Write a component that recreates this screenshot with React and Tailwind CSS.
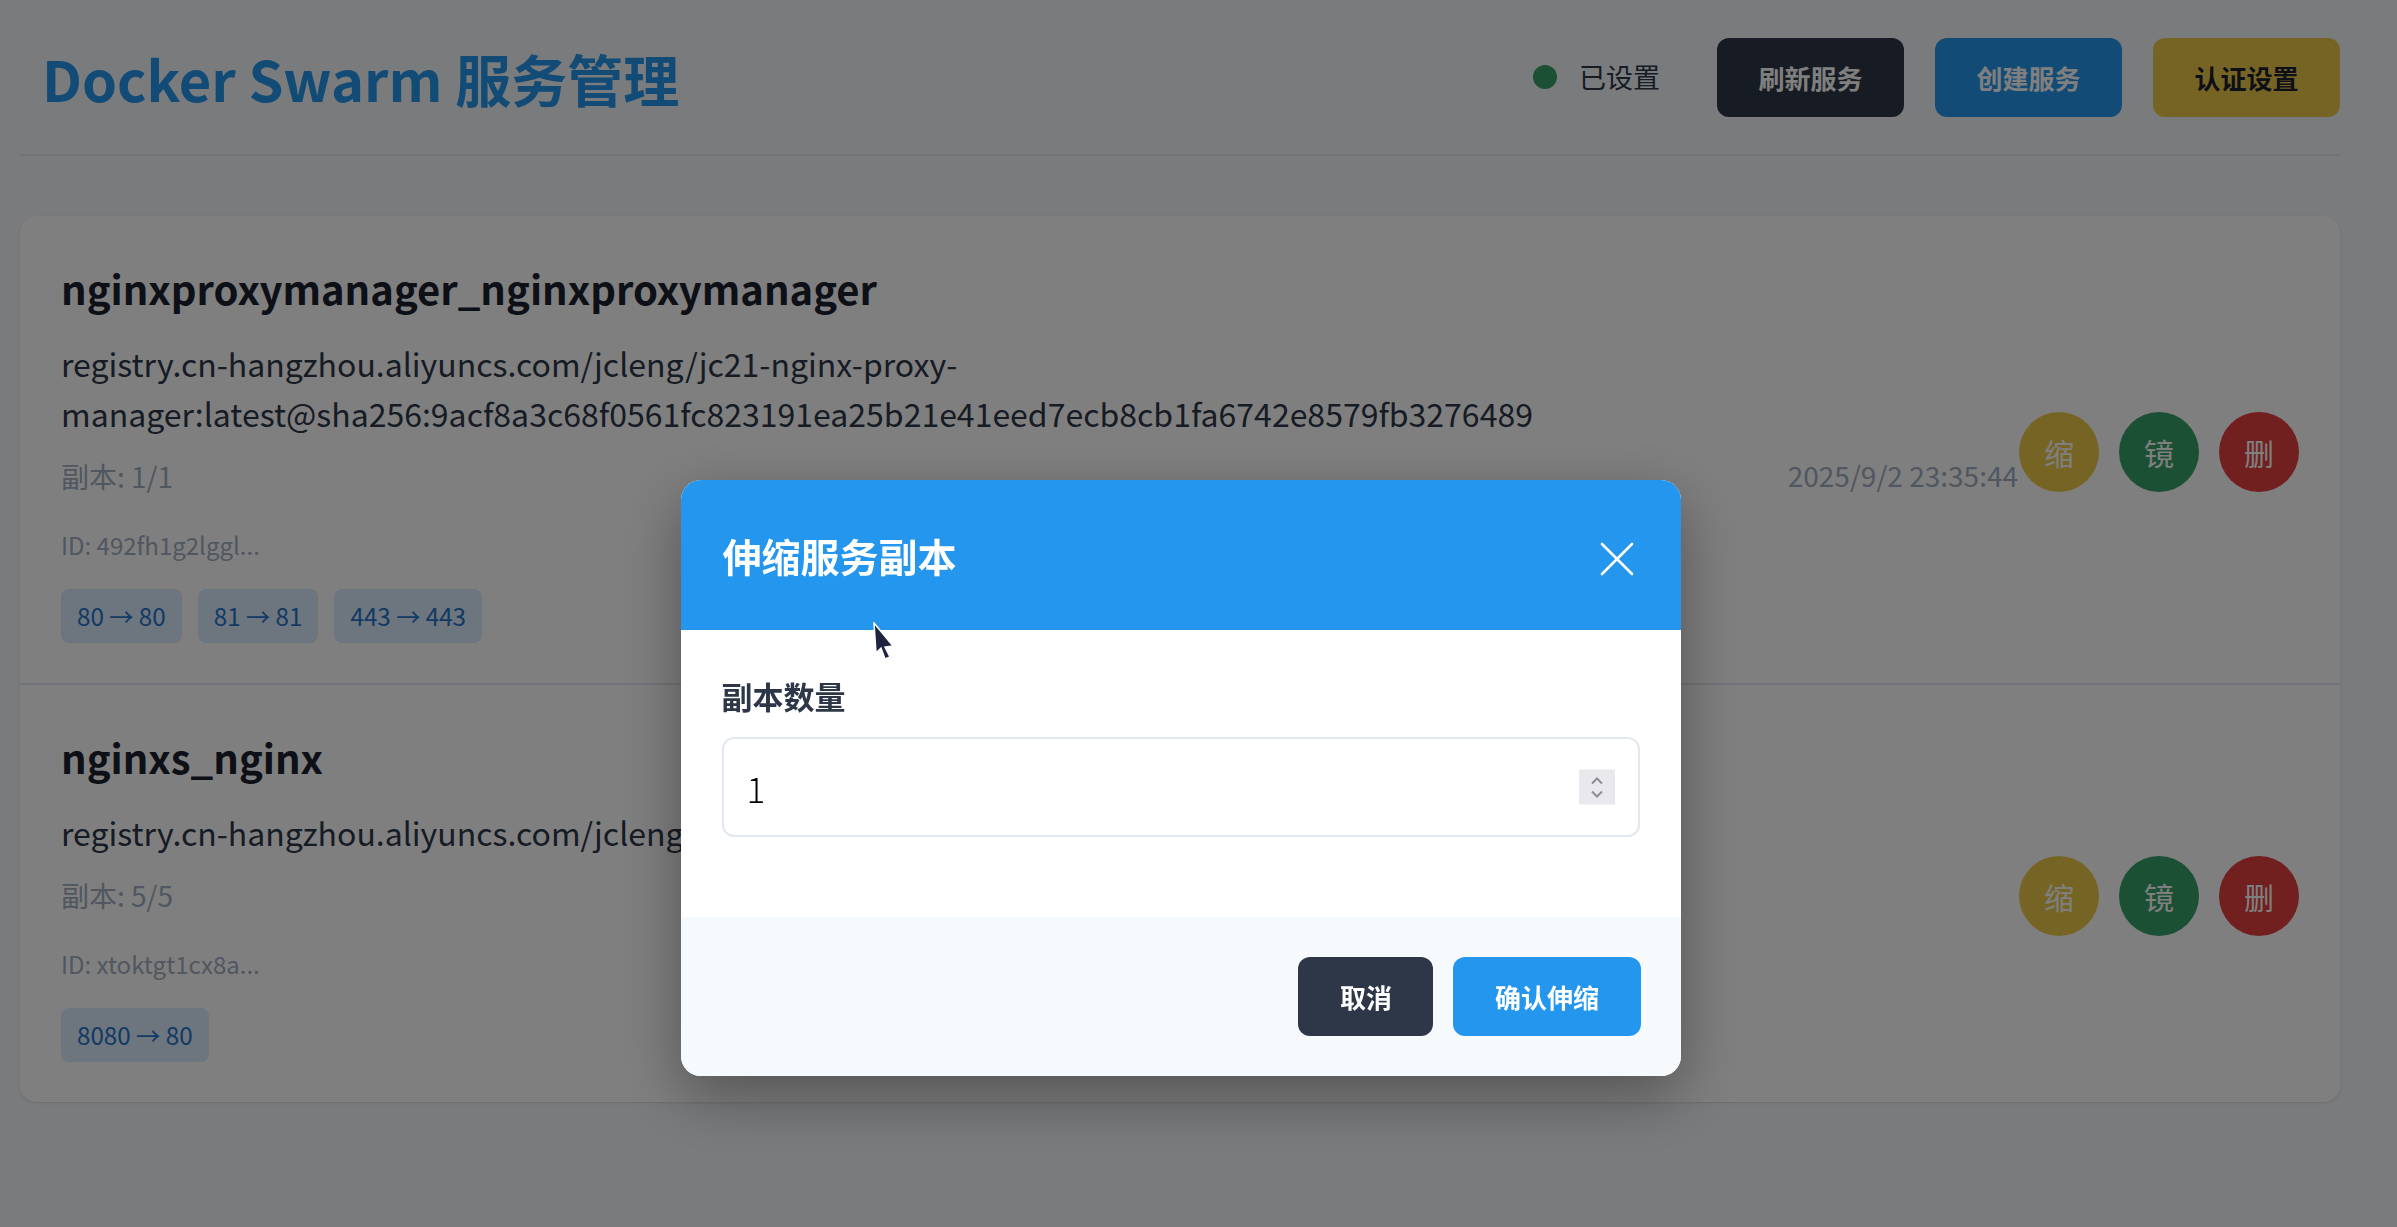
const services = [
  {
    name: "nginxproxymanager_nginxproxymanager",
    image:
      "registry.cn-hangzhou.aliyuncs.com/jcleng/jc21-nginx-proxy-manager:latest@sha256:9acf8a3c68f0561fc823191ea25b21e41eed7ecb8cb1fa6742e8579fb3276489",
    replicas: "1/1",
    id: "492fh1g2lggl...",
    ports: ["80 → 80", "81 → 81", "443 → 443"],
    created: "2025/9/2 23:35:44",
  },
  {
    name: "nginxs_nginx",
    image: "registry.cn-hangzhou.aliyuncs.com/jcleng/nginx:latest",
    replicas: "5/5",
    id: "xtoktgt1cx8a...",
    ports: ["8080 → 80"],
    created: "",
  },
];

function ServiceRow({ svc, last }) {
  return (
    <div
      className={
        "flex items-center px-[41px] pt-[45px] pb-[40px] " +
        (last ? "" : "border-b-2 border-[#e2e8f0]")
      }
    >
      <div className="flex-1 min-w-0">
        <h2 className="text-[40px] leading-[54px] font-bold text-[#1a202c] mb-[23px]">{svc.name}</h2>
        <p className="text-[32px] leading-[50px] text-[#2d3748] mb-[17px] pr-[40px]">{svc.image}</p>
        <p className="text-[28px] leading-[42px] text-[#a0aec0] mb-[31px]">副本: {svc.replicas}</p>
        <p className="text-[24px] leading-[33px] text-[#a0aec0] mb-[28px]">ID: {svc.id}</p>
        <div className="flex gap-[16px]">
          {svc.ports.map((p) => (
            <span
              key={p}
              className="h-[54px] px-[16px] flex items-center rounded-[8px] bg-[#dbeafe] text-[#2474c8] text-[24.2px]"
            >
              {p}
            </span>
          ))}
        </div>
      </div>
      <div className="flex items-end">
        {svc.created && (
          <span className="text-[28px] leading-none text-[#a0aec0] mb-[3px]">{svc.created}</span>
        )}
        <div className="flex gap-[20px] ml-px">
          <button className="w-[80px] h-[80px] rounded-full bg-[#ecc94b] text-white text-[30px]">缩</button>
          <button className="w-[80px] h-[80px] rounded-full bg-[#38a169] text-white text-[30px]">镜</button>
          <button className="w-[80px] h-[80px] rounded-full bg-[#e53e3e] text-white text-[30px]">删</button>
        </div>
      </div>
    </div>
  );
}

export default function App() {
  return (
    <div className="relative min-h-screen bg-[#f4f6fa] font-['Noto_Sans_CJK_SC','Noto_Sans',sans-serif]">
      <div className="pl-[20px] w-[2340px]">
        <header className="flex items-center justify-between h-[156px] pl-[22px] border-b-2 border-[#e2e8f0]">
          <h1 className="text-[56px] font-bold text-[#2496ed] mt-[2px]">Docker Swarm 服务管理</h1>
          <div className="flex items-center">
            <span className="w-[24px] h-[24px] rounded-full bg-[#38a169]" />
            <span className="ml-[22px] mr-[57px] text-[27px] text-[#2d3748]">已设置</span>
            <div className="flex gap-[31px]">
              <button className="h-[79px] px-[41.5px] rounded-[12px] bg-[#2d3748] text-white text-[26px] font-semibold">刷新服务</button>
              <button className="h-[79px] px-[41.5px] rounded-[12px] bg-[#2496ed] text-white text-[26px] font-semibold">创建服务</button>
              <button className="h-[79px] px-[41.5px] rounded-[12px] bg-[#ecc94b] text-[#1a202c] text-[26px] font-semibold">认证设置</button>
            </div>
          </div>
        </header>

        <div className="mt-[60px] bg-white rounded-[16px] shadow-sm">
          {services.map((s, i) => (
            <ServiceRow key={s.name} svc={s} last={i === services.length - 1} />
          ))}
        </div>
      </div>

      {/* modal */}
      <div className="fixed inset-0 bg-black/50 flex justify-center items-start pt-[480px] pr-[36px]">
        <div className="w-[1000px] bg-white rounded-[20px] shadow-[0_20px_60px_rgba(0,0,0,0.35)] overflow-hidden">
          <div className="h-[150px] pl-[42px] pr-[47px] flex items-center justify-between bg-[#2496ed]">
            <h3 className="text-[39px] font-bold text-white">伸缩服务副本</h3>
            <button className="mt-[7px]">
              <svg width="34" height="34" viewBox="0 0 34 34" stroke="white" strokeWidth="2.6" strokeLinecap="round">
                <path d="M2 2 L32 32 M32 2 L2 32" />
              </svg>
            </button>
          </div>
          <div className="px-[41px] pt-[43px] pb-[80px]">
            <label className="block text-[31px] leading-[46px] font-bold text-[#2d3748] mb-[18px]">副本数量</label>
            <div className="relative">
              <input
                type="text"
                defaultValue="1"
                className="w-full h-[100px] border-2 border-[#e2e8f0] rounded-[12px] pl-[23px] text-[35px] font-light text-black outline-none"
              />
              <div className="absolute right-[25px] top-1/2 -translate-y-1/2 w-[36px] h-[35px] bg-[#e9e9ed] flex flex-col items-center justify-center">
                <svg width="16" height="26" viewBox="0 0 16 26" fill="none" stroke="#8d8d99" strokeWidth="2">
                  <path d="M3 9 L8 4 L13 9" />
                  <path d="M3 17 L8 22 L13 17" />
                </svg>
              </div>
            </div>
          </div>
          <div className="bg-[#f7fafc] px-[40px] py-[40px] flex justify-end gap-[20px]">
            <button className="h-[79px] px-[41.5px] rounded-[12px] bg-[#2d3748] text-white text-[26px] font-semibold">取消</button>
            <button className="h-[79px] px-[41.5px] rounded-[12px] bg-[#2496ed] text-white text-[26px] font-semibold">确认伸缩</button>
          </div>
        </div>
      </div>

      {/* mouse pointer */}
      <svg className="absolute left-[873px] top-[622px]" width="24" height="40" viewBox="0 0 24 40">
        <path d="M1 1 L3 31 L8 26 L12 37 L17 35 L12 25 L20 24 Z" fill="#1e2340" stroke="white" strokeWidth="1.5" />
      </svg>
    </div>
  );
}
